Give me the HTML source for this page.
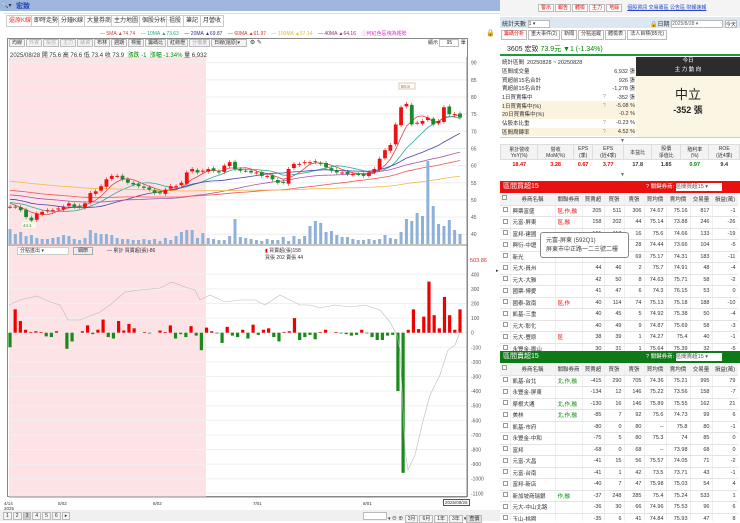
<!DOCTYPE html>
<html><head><meta charset="utf-8">
<style>
*{margin:0;padding:0;box-sizing:border-box}
body{width:740px;height:521px;overflow:hidden;background:#fff;font-family:"Liberation Sans","Noto Sans CJK TC",sans-serif;font-size:6px;color:#333;position:relative}
.abs{position:absolute}
.tab{position:absolute;top:15px;height:12px;border:1px solid #ccc;background:#fff;font-size:6px;line-height:10px;padding:0 2px}
.btn{display:inline-block;border:1px solid #bbb;background:#f4f4f4;height:8px;line-height:7px;font-size:5px;padding:0 2px;margin-right:1px}
table{border-collapse:collapse;font-size:5.5px}
.bt td{height:11.5px;border-bottom:1px solid #e4e4e4;border-right:1px solid #eee;padding:0 2px;text-align:right;white-space:nowrap;overflow:hidden}
.bt td.l{text-align:left}
.bt tr.h td{background:#f3f3f3;text-align:center;height:12px}
.cb{display:inline-block;width:5px;height:5px;border:1px solid #999;background:#fff}
.g{background:#e8f5e4}.p{background:#fde6e6}
.r{color:#e00}.gr{color:#080}
</style></head><body>
<div class="abs" style="left:0;top:0;width:500px;height:11px;background:#9fb7de"></div>
<div class="abs" style="left:1px;top:2px;font-size:6px;color:#333">🔍▾</div>
<div class="abs" style="left:16px;top:1px;font-size:7px;color:#1f3fb0;font-weight:bold">宏致</div>
<div class="abs" style="left:4px;top:13px;width:496px;height:1px;background:#ddd"></div>
<div class="tab" style="left:6px;color:#e33">還原K線</div>
<div class="tab" style="left:31px">即時走勢</div>
<div class="tab" style="left:58px">分鐘K線</div>
<div class="tab" style="left:84px">大量券商</div>
<div class="tab" style="left:111px">主力地圖</div>
<div class="tab" style="left:139px">個股分析</div>
<div class="tab" style="left:166px">祖股</div>
<div class="tab" style="left:183px">筆記</div>
<div class="tab" style="left:200px">月營收</div>
<div class="abs" style="left:100px;top:30px;font-size:5px;white-space:nowrap;color:#555">
<span style="color:#c44">— 5MA ▲74.74</span>&nbsp;&nbsp;&nbsp;&nbsp;<span style="color:#2a8">— 10MA ▲73.63</span>&nbsp;&nbsp;&nbsp;&nbsp;<span style="color:#338">— 20MA ▲69.87</span>&nbsp;&nbsp;&nbsp;&nbsp;<span style="color:#c33">— 60MA ▲61.97</span>&nbsp;&nbsp;&nbsp;&nbsp;<span style="color:#db3">— 100MA ▲57.14</span>&nbsp;&nbsp;&nbsp;&nbsp;<span style="color:#836">— 40MA ▲64.16</span>&nbsp;&nbsp;&nbsp;&nbsp;<span style="color:#d3c">ⓘ何紅色區塊為趨勢</span></div>
<div class="abs" style="left:486px;top:29px;font-size:7px">🔒</div>
<div class="abs" style="left:7px;top:38px;width:461px;height:459px;border:1px solid #888"></div>
<div class="abs" style="left:9px;top:39px;white-space:nowrap"><span class="btn">均線</span><span class="btn" style="color:#aaa">外資</span><span class="btn" style="color:#aaa">投信</span><span class="btn" style="color:#aaa">主力</span><span class="btn" style="color:#aaa">融資</span><span class="btn">布林</span><span class="btn">週期</span><span class="btn">標籤</span><span class="btn">籌碼比</span><span class="btn">紅綠燈</span><span class="btn" style="color:#aaa">分價量</span><span class="btn" style="width:36px">日線(還原)▾</span> ⚙ ✎</div>
<div class="abs" style="left:428px;top:39px;font-size:5px">顯示 <span style="display:inline-block;border:1px solid #bbb;width:20px;text-align:center">95</span> 筆</div>
<svg class="abs" style="left:0;top:0" width="500" height="521" id="ch"></svg>
<div class="abs" style="left:10px;top:50px;font-size:6px;white-space:nowrap">2025/08/28 開 75.6 高 76.6 低 73.4 收 73.9 &nbsp;<span class="gr">漲跌 -1 &nbsp;漲幅 -1.34%</span> 量 6,932</div>
<div class="abs" style="left:17px;top:247px;width:52px;height:8px;border:1px solid #ccc;background:#fff;font-size:5px;line-height:6px;padding-left:2px">分點進出 ▾</div>
<div class="abs" style="left:73px;top:247px;width:20px;height:8px;border:1px solid #aaa;background:#eee;font-size:5px;line-height:6px;text-align:center">細節</div>
<div class="abs" style="left:107px;top:247px;font-size:5px">— 累計 買賣超(張)-86</div>
<div class="abs" style="left:265px;top:247px;font-size:5px"><span class="r">▮</span> 買賣超(張)158<br>買張 202 賣張 44</div>
<div class="abs" style="left:470px;top:258px;font-size:5.5px;color:#c33">503.86</div>
<div class="abs" style="left:4px;top:501px;font-size:4.5px;line-height:5px">4/14<br>2025</div>
<div class="abs" style="left:58px;top:501px;font-size:4.5px">5/02</div>
<div class="abs" style="left:153px;top:501px;font-size:4.5px">6/02</div>
<div class="abs" style="left:253px;top:501px;font-size:4.5px">7/01</div>
<div class="abs" style="left:363px;top:501px;font-size:4.5px">8/01</div>
<div class="abs" style="left:443px;top:499px;font-size:4.5px;border:1px solid #555;padding:0 1px;background:#fff">2025/08/28</div>
<div class="abs" style="left:0;top:510px;width:500px;height:11px;background:#f0f0f0"></div>
<div class="abs" style="left:3px;top:512px;font-size:5px;white-space:nowrap"><span class="btn">1</span><span class="btn">2</span><span class="btn" style="background:#ccc">3</span><span class="btn">4</span><span class="btn">5</span><span class="btn">6</span><span class="btn">▸</span></div>
<div class="abs" style="left:363px;top:512px;font-size:5px;white-space:nowrap"><span class="btn" style="width:24px;background:#fff"></span>▾ ⊖ ⊕ <span class="btn">3月</span><span class="btn">6月</span><span class="btn">1年</span><span class="btn">3年</span>▾<span class="btn" style="background:#ddd">查價</span></div>
<div class="abs" style="left:496px;top:268px;font-size:5px">▸</div>

<div class="abs" style="left:500px;top:0;width:240px;height:16px;background:#f4f4f4"></div>
<div class="abs" style="left:538px;top:4px;white-space:nowrap;font-size:5px">
<span class="btn r" style="background:#fff">警示</span><span class="btn r" style="background:#fff">報告</span><span class="btn r" style="background:#fff">體檢</span><span class="btn r" style="background:#fff">主力</span><span class="btn r" style="background:#fff">地緣</span>
&nbsp;&nbsp;<span style="color:#24c;text-decoration:underline">個股資訊 交易專區 公告區 財報速報</span></div>
<div class="abs" style="left:500px;top:17px;width:240px;height:11px;background:#dde7f3"></div>
<div class="abs" style="left:502px;top:19px;font-size:6px">統計天數 <span style="display:inline-block;width:22px;height:8px;border:1px solid #bbb;background:#fff;font-size:5px;vertical-align:middle">1 ▾</span></div>
<div class="abs" style="left:650px;top:19px;font-size:6px;white-space:nowrap">🔒日期 <span style="display:inline-block;width:52px;height:8px;border:1px solid #bbb;background:#fff;font-size:5px;vertical-align:middle;color:#666">2025/8/28 ▾</span> <span style="display:inline-block;width:12px;height:8px;border:1px solid #bbb;background:#fff;font-size:5px;vertical-align:middle">今天</span></div>
<div class="abs" style="left:501px;top:30px;font-size:5.5px;white-space:nowrap"><span class="btn r" style="background:#fff;height:10px">籌碼分析</span><span class="btn" style="background:#fff;height:10px">重大事件(2)</span><span class="btn" style="background:#fff;height:10px">新聞</span><span class="btn" style="background:#fff;height:10px">分點追蹤</span><span class="btn" style="background:#fff;height:10px">體檢表</span><span class="btn" style="background:#fff;height:10px">法人目標(85元)</span></div>
<div class="abs" style="left:500px;top:42px;width:240px;height:14px;border-bottom:2px solid #1a9a3a"></div>
<div class="abs" style="left:507px;top:44px;font-size:7px;white-space:nowrap">3605 宏致 <span class="gr">73.9元 ▼1 (-1.34%)</span></div>
<table class="abs" style="left:502px;top:58px;width:133px;font-size:5.5px">
<tr><td style="height:8.7px">統計區間 &nbsp;20250828 ~ 20250828</td><td></td><td></td></tr>
<tr><td style="height:8.7px">區間成交量</td><td></td><td style="text-align:right">6,932 張</td></tr>
<tr><td style="height:8.7px">買超前15名合計</td><td></td><td style="text-align:right">926 張</td></tr>
<tr><td style="height:8.7px">賣超前15名合計</td><td></td><td style="text-align:right">-1,278 張</td></tr>
<tr><td style="height:8.7px">1日買賣集中</td><td style="color:#999">?</td><td style="text-align:right">-352 張</td></tr>
<tr style="background:#fbf3de"><td style="height:8.7px">1日買賣集中(%)</td><td style="color:#999">?</td><td style="text-align:right">-5.08 %</td></tr>
<tr style="background:#fbf3de"><td style="height:8.7px">20日買賣集中(%)</td><td></td><td style="text-align:right">-0.2 %</td></tr>
<tr><td style="height:8.7px">佔股本比重</td><td style="color:#999">?</td><td style="text-align:right">-0.23 %</td></tr>
<tr style="background:#fbf3de"><td style="height:8.7px">區間周轉率</td><td style="color:#999">?</td><td style="text-align:right">4.52 %</td></tr>
</table>
<div class="abs" style="left:636px;top:57px;width:104px;height:19px;background:#2c2c2c;color:#fff;text-align:center;font-size:5.5px;line-height:9px">今日<br>主 力 動 向</div>
<div class="abs" style="left:636px;top:76px;width:104px;height:61px;background:#fbf6e4;text-align:center"><div style="font-size:13px;margin-top:8px;color:#222">中立</div><div style="font-size:9px;font-weight:bold;color:#222">-352 張</div></div>
<div class="abs" style="left:500px;top:137px;width:240px;height:1px;background:#ccc"></div>
<div class="abs" style="left:620px;top:138px;font-size:5px;color:#666">▼</div>
<table class="abs" style="left:500px;top:144px;width:240px;text-align:center;font-size:5px">
<tr style="background:#f3f3f3"><td style="height:14px;border:1px solid #ddd">累計營收<br>YoY(%)</td><td style="border:1px solid #ddd">營收<br>MoM(%)</td><td style="border:1px solid #ddd">EPS<br>(季)</td><td style="border:1px solid #ddd">EPS<br>(近4季)</td><td style="border:1px solid #ddd">本益比</td><td style="border:1px solid #ddd">股價<br>淨值比</td><td style="border:1px solid #ddd">殖利率<br>(%)</td><td style="border:1px solid #ddd">ROE<br>(近4季)</td></tr>
<tr style="font-weight:bold;font-size:5.5px"><td class="r" style="height:10px">18.47</td><td class="r">3.28</td><td class="r">0.67</td><td class="r">3.77</td><td>17.8</td><td>1.85</td><td class="gr">0.97</td><td>9.4</td></tr>
</table>
<div class="abs" style="left:620px;top:172px;font-size:5px;color:#666">▼</div>
<div class="abs" style="left:500px;top:181px;width:240px;height:12px;background:#e8110f;color:#fff;font-size:7px;line-height:12px;padding-left:3px">區間買超15<span style="position:absolute;left:146px;font-size:5.5px">? 關鍵券商: <span style="display:inline-block;width:46px;height:8px;background:#fff;color:#555;vertical-align:middle;line-height:8px">區間買超15 ▾</span></span></div>
<div class="abs" style="left:500px;top:351px;width:240px;height:12px;background:#0d7a17;color:#fff;font-size:7px;line-height:12px;padding-left:3px">區間賣超15<span style="position:absolute;left:146px;font-size:5.5px">? 關鍵券商: <span style="display:inline-block;width:46px;height:8px;background:#fff;color:#555;vertical-align:middle;line-height:8px">區間賣超15 ▾</span></span></div>
<div id="t1" class="abs" style="left:500px;top:193px;width:238px;height:158px;overflow:hidden"></div>
<div id="t2" class="abs" style="left:500px;top:363px;width:238px;height:158px;overflow:hidden"></div>
<div class="abs" style="left:540px;top:232px;width:89px;height:26px;background:#fff;border:1px solid #888;border-radius:3px;font-size:6px;line-height:9px;padding:4px 5px;color:#444">元富-屏東 (592Q1)<br>屏東市中正路一二三號二樓</div>
<script>
function tbl(id,rows,buy){
 var h='<table class="bt" style="width:238px;table-layout:fixed"><colgroup><col style="width:10px"><col style="width:45px"><col style="width:27px"><col style="width:22px"><col style="width:20px"><col style="width:20px"><col style="width:22px"><col style="width:24px"><col style="width:22px"><col style="width:26px"></colgroup>';
 h+='<tr class="h"><td><span class="cb"></span></td><td>券商名稱</td><td>關聯券商</td><td>買賣超</td><td>買張</td><td>賣張</td><td>買均價</td><td>賣均價</td><td>交易量</td><td>損益(萬)</td></tr>';
 rows.forEach(function(r){var cls=r[10]||'';h+='<tr class="'+cls+'"><td><span class="cb"></span></td><td class="l">'+r[0]+'</td><td class="l '+(buy?'r':'gr')+'">'+r[1]+'</td>';for(var i=2;i<9;i++)h+='<td>'+r[i]+'</td>';h+='<td>'+r[9]+'</td></tr>';});
 document.getElementById(id).innerHTML=h+'</table>';}
tbl('t1',[
['興票富盛','區,作,融',205,511,306,74.67,75.16,817,-1,'g'],
['元富-屏東','區,融',158,202,44,75.14,73.88,246,-26,'p'],
['富邦-建國','',101,117,16,75.6,74.66,133,-19],
['興衍-中壢','',84,112,28,74.44,73.66,104,-5],
['新光','',126,57,69,75.17,74.31,183,-11,'g'],
['元大-員州','',44,46,2,75.7,74.91,48,-4],
['元大-大雅','',42,50,8,74.63,75.71,58,-2],
['國票-博愛','',41,47,6,74.3,76.15,53,0],
['國泰-敦南','區,作',40,114,74,75.13,75.18,188,-10],
['凱基-三重','',40,45,5,74.92,75.38,50,-4],
['元大-彰化','',40,49,9,74.87,75.69,58,-3],
['元大-豐原','區',38,39,1,74.27,75.4,40,-1],
['永豐金-鳳山','',30,31,1,75.64,75.39,32,-5]],1);
tbl('t2',[
['凱基-台北','北,作,融',-415,290,705,74.36,75.21,995,79,'p'],
['永豐金-屏東','',-134,12,146,75.22,73.56,158,-7],
['摩根大通','北,作,融',-130,16,146,75.89,75.55,162,21,'g'],
['美林','北,作,融',-85,7,92,75.6,74.73,99,6,'g'],
['凱基-市府','',-80,0,80,'--',75.8,80,-1],
['永豐金-中和','',-75,5,80,75.3,74,85,0],
['富邦','',-68,0,68,'--',73.98,68,0],
['元富-大昌','',-41,15,56,75.57,74.05,71,-2],
['元富-台南','',-41,1,42,73.5,73.71,43,-1],
['富邦-新店','',-40,7,47,75.98,75.03,54,4],
['新加坡商瑞銀','作,融',-37,248,285,75.4,75.24,533,1,'g'],
['元大-中山北路','',-36,30,66,74.96,75.53,96,6],
['玉山-桃園','',-35,6,41,74.84,75.93,47,8]],0);

var S='';
function R(x,y,w,h,c){S+='<rect x="'+x+'" y="'+y+'" width="'+w+'" height="'+h+'" fill="'+c+'"/>';}
function L(x1,y1,x2,y2,c,w){S+='<line x1="'+x1+'" y1="'+y1+'" x2="'+x2+'" y2="'+y2+'" stroke="'+c+'" stroke-width="'+(w||1)+'"/>';}
function T(x,y,t,c,s){S+='<text x="'+x+'" y="'+y+'" font-size="'+(s||5)+'" fill="'+(c||'#555')+'" font-family="Liberation Sans">'+t+'</text>';}
R(9,57,197,440,'#fde3e6');
var PY=function(p){return 62.7+(90-p)*3.43};
for(var p=40;p<=90;p+=5){L(9,PY(p),467,PY(p),'#eee');T(471,PY(p)+2,p);}
var BY=function(v){return 332.7-v*0.146};
for(var v=400;v>=-1100;v-=100){L(9,BY(v),467,BY(v),'#f0f0f0');T(471,BY(v)+2,v);}
L(7,245,468,245,'#888');L(467,57,467,497,'#888');
var c=[48,48,47,45,44,46,46.5,47,47,47.5,48,49,48,48,49,52,52.5,54,56,57,57,56,55,54.5,54,53.5,53,52,52,53,54,54,55,58,59,58,58.5,59,58.5,58,60,61,59,58.5,58.5,58,58,57,57,56,55,55,59,60.5,60.5,61,61,61,60.5,59.5,58.5,58,58,57.5,57.5,57.5,57,58,59,62,64.5,66,72,77,78,72,72.5,73,74,72,73,77,75,75,74];
var n=c.length,dx=450/(n-1);
var hist=[];for(var i=0;i<100;i++)hist.push(62-i*0.13+Math.sin(i)*1.5);
var all=hist.concat(c);
function ma(k,col){var pts=[];for(var i=0;i<n;i++){var j=100+i,s=0;for(var q=0;q<k;q++)s+=all[j-q];pts.push((10+i*dx).toFixed(1)+','+PY(s/k).toFixed(1));}S+='<polyline fill="none" stroke="'+col+'" stroke-width="0.8" points="'+pts.join(' ')+'"/>';}
ma(5,'#d44');ma(10,'#3a9');ma(20,'#44a');ma(40,'#a5a');ma(60,'#e55');ma(100,'#eb4');
var vol=[15,10,12,8,9,6,5,5,6,7,9,8,5,4,6,14,11,10,10,9,6,5,5,4,4,5,4,5,3,6,4,8,12,14,14,6,11,6,5,4,4,8,25,7,6,5,4,3,5,4,4,7,3,8,5,8,18,23,21,12,13,9,7,7,5,4,4,5,4,5,9,6,5,12,25,23,31,28,83,38,20,18,24,14,10,24,22,7,8,9];
for(var i=0;i<n;i++){var x=10+i*dx,o=i?c[i-1]+(Math.sin(i*3)*0.3):c[i],cl=c[i],up=cl>=o,hi=Math.max(o,cl)+0.6,lo=Math.min(o,cl)-0.6;
 var col=up?'#e11':'#1a8a2a';L(x,PY(hi),x,PY(lo),col,0.6);var t=PY(Math.max(o,cl)),b=PY(Math.min(o,cl));R(x-1.9,t,3.8,Math.max(1,b-t),col);
 var vh=vol[i%vol.length];R(x-1.5,244-vh,3,vh,'#8fb0d8');}
S+='<rect x="399" y="83" width="16" height="6" fill="#fff" stroke="#dca"/>';T(401,88,'80.8','#d44',4.5);
S+='<rect x="22" y="222" width="14" height="6" fill="#f4fbe6"/>';T(23,227,'44.1','#484',4.5);
var b=[-100,160,80,20,5,10,5,-25,-30,10,0,-110,-60,0,10,50,-10,20,90,-30,-40,80,15,60,30,0,5,-5,0,15,5,50,-40,-10,-30,45,-20,-120,35,10,-5,-70,40,-20,-30,20,-40,55,-15,20,30,-30,-60,5,10,100,-50,-30,-15,-45,5,20,0,5,-5,-10,-20,-15,20,-5,-30,-50,-50,-20,-15,-400,-960,20,160,25,110,350,120,30,245,120,20,160];
var bdx=450/(b.length-1);
for(var i=0;i<b.length;i++){var x=10+i*bdx,v=b[i];if(v>=0)R(x-1.6,BY(v),3.2,BY(0)-BY(v),'#e00');else R(x-1.6,BY(0),3.2,BY(v)-BY(0),'#1a8a1a');}
S+='<polyline fill="none" stroke="#bbb" stroke-width="0.6" points="9,305 20,300 37,296 50,302 60,305 68,320 80,320 90,316 100,312 110,305 125,292 140,290 160,288 172,282 185,287 195,290 200,300 210,295 225,302 240,300 255,300 265,305 280,295 290,300 300,305 310,305 320,308 335,305 350,307 365,305 380,310 390,322 397,335 400,350 405,450 408,470 415,455 422,425 430,395 440,375 448,350 455,345 460,332"/>';
L(9,497,467,497,'#888');
document.getElementById('ch').innerHTML=S;
</script>
</body></html>
